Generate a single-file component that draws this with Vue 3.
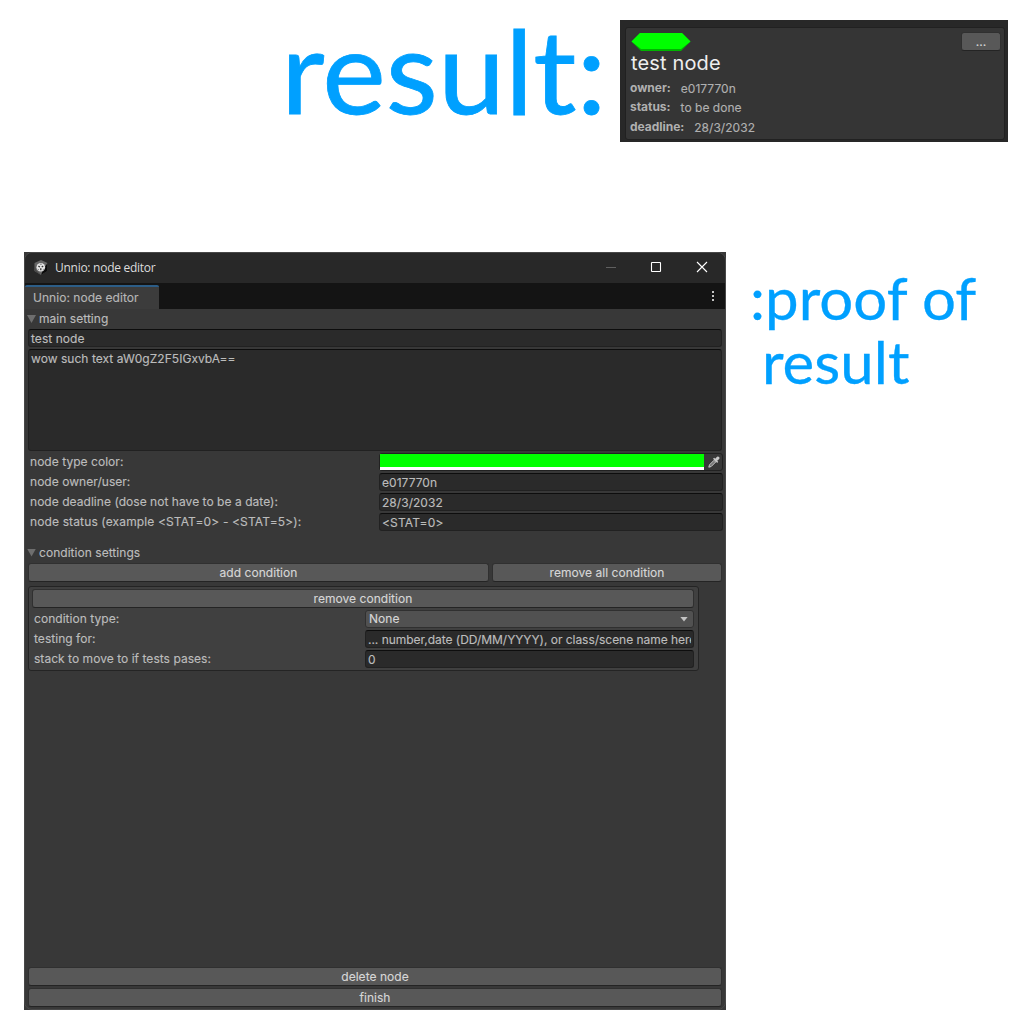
<script setup>
const nodeRows = [
  { label: 'node owner/user:', value: 'e017770n' },
  { label: 'node deadline (dose not have to be a date):', value: '28/3/2032' },
  { label: 'node status (example <STAT=0> - <STAT=5>):', value: '<STAT=0>', wide: true },
]
const conditionRows = [
  { label: 'testing for:', value: '... number,date (DD/MM/YYYY), or class/scene name here' },
  { label: 'stack to move to if tests pases:', value: '0' },
]
</script>

<template>
  <main class="page">
    <header class="top">
      <h1 class="heading"><span>result:</span></h1>
      <section class="preview">
        <div class="card">
          <div class="card-top">
            <svg class="gem" width="60" height="18" viewBox="0 0 60 18">
              <path d="M.5 8.5 9 0H51L59.5 8.5 50 18H10Z" fill="#00b400" />
              <path d="M.5 8.5 9 0H51L59.5 8.5 50 16H10Z" fill="#00ff00" />
            </svg>
            <button class="btn more">...</button>
          </div>
          <div class="card-title">test node</div>
          <div class="meta"><b>owner:</b><span>e017770n</span></div>
          <div class="meta"><b>status:</b><span>to be done</span></div>
          <div class="meta"><b>deadline:</b><span>28/3/2032</span></div>
        </div>
      </section>
    </header>

    <div class="bottom">
      <section class="shell">
        <div class="window">
          <div class="titlebar">
            <svg class="logo" width="14" height="15" viewBox="0 0 14 15">
              <path d="M7 0 13.5 3V11L7 15 .5 11V3Z" fill="#666" />
              <path d="M13.5 3V11L7 15 9 10Z" fill="#0c0c0c" />
              <path d="M.5 3 2 10 7 15 .5 11Z" fill="#484848" />
              <circle cx="6.8" cy="7.2" r="4.3" fill="#e6e6e6" />
              <path d="M6.8 8.2V10.2M5.9 7 4.4 6.1M7.7 7 9.2 6.1" stroke="#333" stroke-width="1.3" />
              <path d="M5.8 4.2h2M3.9 9.2l.9.7M9.7 9.2l-.9.7" stroke="#777" stroke-width="1" />
            </svg>
            <span class="title">Unnio: node editor</span>
            <svg class="controls" width="110" height="12" viewBox="0 0 110 12">
              <path d="M1 6.5H11" stroke="#606060" />
              <rect x="46.5" y="1.5" width="9" height="9" rx=".5" fill="none" stroke="#fff" stroke-width="1.1" />
              <path d="M92 1 102 11M102 1 92 11" stroke="#fff" stroke-width="1.1" />
            </svg>
          </div>

          <div class="tabs">
            <div class="tab"><span>Unnio: node editor</span></div>
            <div class="dots"><i></i><i></i><i></i></div>
          </div>

          <div class="content">
            <div class="fold"><i></i><span>main setting</span></div>
            <div class="field name">test node</div>
            <div class="field area">wow such text aW0gZ2F5IGxvbA==</div>

            <div class="row">
              <span class="label">node type color:</span>
              <div class="color">
                <div class="swatch"></div>
                <svg width="12" height="12" viewBox="0 0 12 12">
                  <path d="M.8 11.2 1.5 8.8 6 4.3 7.7 6 3.2 10.5Z" fill="#777" stroke="#c4c4c4" stroke-width="1" />
                  <path d="M5 2.8 6.2 1.8 7.2 2.8 9 .8Q10 0 11.1.9 12 2 11.2 3L9.2 4.8 10.2 5.8 9.2 7Z" fill="#c8c8c8" />
                </svg>
              </div>
            </div>
            <div v-for="r in nodeRows" :key="r.label" class="row">
              <span class="label" :class="{ wide: r.wide }">{{ r.label }}</span>
              <div class="field" :class="{ wide: r.wide }">{{ r.value }}</div>
            </div>

            <div class="fold second-fold"><i></i><span>condition settings</span></div>
            <div class="pair">
              <button class="btn add">add condition</button>
              <button class="btn remove-all">remove all condition</button>
            </div>

            <div class="box">
              <button class="btn">remove condition</button>
              <div class="row">
                <span class="label">condition type:</span>
                <div class="select">None<i></i></div>
              </div>
              <div v-for="r in conditionRows" :key="r.label" class="row">
                <span class="label">{{ r.label }}</span>
                <div class="field"><span class="clip">{{ r.value }}</span></div>
              </div>
            </div>

            <div class="footer">
              <button class="btn">delete node</button>
              <button class="btn">finish</button>
            </div>
          </div>
        </div>
      </section>
      <h2 class="proof"><span>:proof of</span><span class="line2">result</span></h2>
    </div>
  </main>
</template>

<style>
body { background: #fff; }
</style>

<style scoped>
* { box-sizing: border-box; }
.page {
  width: 1032px;
  height: 1032px;
  overflow: hidden;
  font-family: Inter, sans-serif;
  font-size: 12px;
  letter-spacing: 0.04px;
  color: #bcbcbc;
  white-space: nowrap;
  -webkit-text-stroke: 0.15px;
}
h1, h2 { margin: 0; font-family: Lato, sans-serif; font-weight: 400; color: #00a0ff; letter-spacing: 0; }
.top { display: flex; height: 252px; padding: 20px 24px 0 0; justify-content: flex-end; }
.heading { width: 339px; height: 120px; font-size: 117px; line-height: 98px; -webkit-text-stroke: 0.8px #00a0ff; }
.heading span { display: inline-block; transform: scaleX(1.028); transform-origin: left; }
.preview { width: 388px; height: 122px; background: #282828; padding: 7px 3px 2px 5px; }
.card {
  height: 113px;
  background: #353535;
  border: 1px solid #212121;
  border-radius: 3px;
  padding: 5px 3px 0 4px;
}
.card-top { display: flex; justify-content: space-between; height: 18px; padding-left: 1px; }
.gem { display: block; }
.card-title { font-size: 20px; line-height: 24px; color: #eee; letter-spacing: 0.15px; padding-left: 1px; -webkit-text-stroke: 0; }
.meta { display: flex; gap: 10px; line-height: 19px; height: 19.4px; color: #b0b0b0; padding-top: 4px; }
.meta b { font-weight: 700; margin-top: -1px; letter-spacing: -0.03px; -webkit-text-stroke: 0; }

.btn {
  display: flex;
  align-items: center;
  justify-content: center;
  width: 100%;
  height: 19px;
  padding: 0;
  margin: 0;
  border: 1px solid #303030;
  border-bottom-color: #242424;
  border-radius: 3px;
  background: #585858;
  color: #d6d6d6;
  font: inherit;
  letter-spacing: inherit;
}
.more { width: 40px; margin-top: -1px; }

.bottom { display: flex; }
.shell { width: 702px; height: 758px; margin-left: 24px; background: #383838; flex: none; }
.window {
  height: 758px;
  display: flex;
  flex-direction: column;
  border: 1px solid #484848;
  border-radius: 8px;
  overflow: hidden;
  background: #383838;
}
.titlebar { height: 30px; flex: none; display: flex; align-items: center; padding: 0 10px 0 9px; background: #282828; }
.logo { margin-top: -2px; }
.title { font-family: "Open Sans", sans-serif; font-size: 12px; color: #dcdcdc; margin: -1px 0 0 7px; letter-spacing: -0.27px; -webkit-text-stroke: 0; }
.controls { margin: -2px 0 0 auto; }
.tabs { height: 26px; flex: none; display: flex; justify-content: space-between; background: #141414; }
.tab { width: 134px; margin-top: 2px; border-top: 2px solid #2c5d87; border-radius: 2px 2px 0 0; background: #3c3c3c; padding-left: 8px; line-height: 22px; color: #b6b6b6; }
.dots { width: 3px; margin: 8px 10px 0 0; display: flex; flex-direction: column; gap: 2px; }
.dots i { width: 2px; height: 2px; background: #c4c4c4; }

.content { flex: 1; display: flex; flex-direction: column; padding: 0 3px 2px; }
.fold { display: flex; align-items: center; height: 19px; line-height: 19px; }
.fold i { width: 9px; height: 8px; background: #6e6e6e; clip-path: polygon(0 0, 100% 0, 50% 100%); margin: 1px 3px 0 -1px; }
.second-fold { margin: 10px 0 1px; height: 20px; }
.field {
  height: 18px;
  line-height: 18px;
  padding: 0 2px;
  background: #2a2a2a;
  border: 1px solid #212121;
  border-top-color: #0d0d0d;
  border-radius: 3px;
  overflow: hidden;
}
.clip { display: block; overflow: hidden; letter-spacing: -0.03px; }
.name { margin: 1px 0; }
.area { height: 102px; margin: 1px 0; }
.name, .area { width: 694px; }
.row { display: flex; height: 20px; padding-left: 2px; }
.row .label { width: 349px; line-height: 19px; flex: none; }
.row .wide { letter-spacing: 0.13px; }
.row .field, .color { width: 344px; margin-top: 1px; line-height: 18px; flex: none; }
.color { height: 18px; border: 1px solid #212121; border-radius: 3px; display: flex; align-items: center; gap: 4px; }
.swatch { width: 324px; height: 16px; background: #00ff00; border-bottom: 3px solid #fff; }
.pair { display: flex; gap: 3px; }
.add { width: 461px; }
.remove-all { width: 230px; }
.box { width: 671px; height: 85px; margin-top: 4px; padding: 2px 4px 0 3px; background: #404040; border: 1px solid #242424; border-radius: 3px; }
.box > .btn { width: 662px; margin-bottom: 1px; }
.box .row .label { width: 331px; }
.box .row .field, .select { width: 329px; }
.select { display: flex; align-items: center; justify-content: space-between; height: 18px; margin-top: 1px; padding: 0 5px 1px 3px; background: #515151; border: 1px solid #303030; border-radius: 3px; color: #d6d6d6; }
.select i { width: 8px; height: 5px; margin-top: 1px; background: #c4c4c4; clip-path: polygon(0 0, 100% 0, 50% 100%); }
.footer { margin-top: auto; display: flex; flex-direction: column; gap: 2px; }
.footer .btn, .pair { width: 694px; }

.proof { margin: 14px 0 0 24px; font-size: 59px; line-height: 64px; -webkit-text-stroke: 0.3px #00a0ff; }
.proof span { display: block; transform: scaleX(1.017); transform-origin: left; }
.proof .line2 { margin-left: 12px; }
</style>
